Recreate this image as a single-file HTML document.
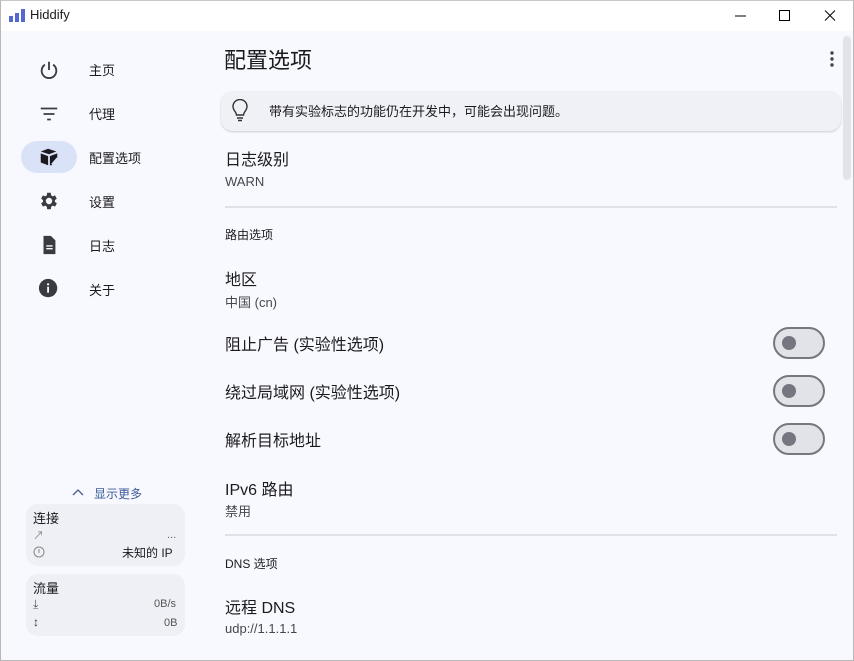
<!DOCTYPE html>
<html><head><meta charset="utf-8"><style>
*{margin:0;padding:0;box-sizing:border-box}
body{width:854px;height:661px;overflow:hidden;background:#f8f9fe;font-family:"Liberation Sans","Noto Sans CJK SC",sans-serif;color:#1b1b1f;position:relative}
.a{position:absolute;white-space:nowrap}
.frame{position:absolute;left:0;top:0;width:854px;height:661px;border:1px solid #b8b8b8;border-top:1px solid #c8c8c8;pointer-events:none}
.title{position:absolute;left:0;top:0;width:854px;height:31px;background:#fff}
.nav{font-size:13px;color:#1b1b1f}
.h{font-size:16px}
.s{font-size:13px;color:#45464f}
.sec{font-size:12px;color:#1b1b1f}
.div{position:absolute;left:225px;width:612px;height:2px;background:#e0e1e6}
.tg{position:absolute;left:773px;width:52px;height:32px;border:2px solid #75767f;border-radius:16px;background:#e2e2e9}
.tg::after{content:"";position:absolute;left:7px;top:7px;width:14px;height:14px;border-radius:50%;background:#75767f}
.card{position:absolute;left:26px;width:159px;background:#eef0f6;border-radius:12px}
</style></head><body>
<div class="title"></div>
<svg class="a" style="left:9px;top:8px" width="17" height="14" viewBox="0 0 17 14"><rect x="0" y="8" width="4" height="6" fill="#5468d4"/><rect x="6" y="5" width="4" height="9" fill="#5468d4"/><rect x="12" y="1" width="4" height="13" fill="#5468d4"/></svg>
<div class="a" style="left:30px;top:7px;font-size:13px">Hiddify</div>
<svg class="a" style="left:730px;top:8px" width="110" height="16"><line x1="5" y1="8" x2="16" y2="8" stroke="#000" stroke-width="1"/><rect x="49.5" y="2.5" width="10" height="10" fill="none" stroke="#000"/><path d="M95 2.5l10 10M105 2.5l-10 10" stroke="#000"/></svg>

<!-- nav -->
<svg class="a" style="left:38px;top:59px" width="22" height="22" viewBox="0 0 24 24"><path d="M12 3v9" stroke="#3a3b42" stroke-width="2"/><path d="M7.5 6.2A8 8 0 1 0 16.5 6.2" fill="none" stroke="#3a3b42" stroke-width="2"/></svg>
<div class="a nav" style="left:89px;top:60px">主页</div>
<svg class="a" style="left:38px;top:103px" width="22" height="22" viewBox="0 0 24 24"><path d="M3 6h18M6 12h12M10 18h4" stroke="#3a3b42" stroke-width="2"/></svg>
<div class="a nav" style="left:89px;top:104px">代理</div>
<div class="a" style="left:21px;top:141px;width:56px;height:32px;border-radius:16px;background:#dae2f7"></div>
<svg class="a" style="left:38px;top:146px" width="22" height="22" viewBox="0 0 24 24"><path d="M3 6l8-3 9 3-8 3z" fill="#1b1b1f"/><path d="M3 8l8 3v10l-8-3z" fill="#1b1b1f"/><path d="M13 11l8-3v5l-6 8h-2z" fill="#1b1b1f"/><path d="M15 20l6-7" stroke="#dae2f7" stroke-width="1.5"/></svg>
<div class="a nav" style="left:89px;top:148px">配置选项</div>
<svg class="a" style="left:38px;top:190px" width="22" height="22" viewBox="0 0 24 24"><path fill="#3a3b42" d="M19.4 13a7.5 7.5 0 0 0 0-2l2.1-1.6-2-3.5-2.5 1a7 7 0 0 0-1.7-1L15 3h-4l-.4 2.9a7 7 0 0 0-1.7 1l-2.5-1-2 3.5L6.5 11a7.5 7.5 0 0 0 0 2l-2.1 1.6 2 3.5 2.5-1a7 7 0 0 0 1.7 1L11 21h4l.4-2.9a7 7 0 0 0 1.7-1l2.5 1 2-3.5zM13 15.5a3.5 3.5 0 1 1 0-7 3.5 3.5 0 0 1 0 7z" transform="translate(-1 0)"/></svg>
<div class="a nav" style="left:89px;top:192px">设置</div>
<svg class="a" style="left:38px;top:234px" width="22" height="22" viewBox="0 0 24 24"><path fill="#3a3b42" d="M6 2h8l5 5v15H6z"/><path d="M9 13h7M9 16h7" stroke="#f8f9fe" stroke-width="1.5"/></svg>
<div class="a nav" style="left:89px;top:236px">日志</div>
<svg class="a" style="left:38px;top:278px" width="22" height="22" viewBox="0 0 24 24"><circle cx="11" cy="11" r="10" fill="#3a3b42"/><rect x="10" y="9.5" width="2" height="6.5" fill="#f8f9fe"/><circle cx="11" cy="6.8" r="1.2" fill="#f8f9fe"/></svg>
<div class="a nav" style="left:89px;top:280px">关于</div>

<svg class="a" style="left:72px;top:488px" width="12" height="10"><path d="M1 7l5-5 5 5" fill="none" stroke="#4a5a8a" stroke-width="1.3"/></svg>
<div class="a" style="left:94px;top:485px;font-size:12px;color:#3c5a99">显示更多</div>
<div class="card" style="top:504px;height:62px"></div>
<div class="a" style="left:33px;top:508px;font-size:13px">连接</div>
<div class="a" style="left:33px;top:527px;font-size:11px;color:#888">↗</div>
<div class="a" style="left:167px;top:529px;font-size:11px;color:#666">...</div>
<svg class="a" style="left:33px;top:546px" width="12" height="12"><circle cx="6" cy="6" r="5" fill="none" stroke="#888"/><path d="M6 3v4" stroke="#888"/></svg>
<div class="a" style="left:122px;top:544px;font-size:12px">未知的 IP</div>
<div class="card" style="top:574px;height:62px"></div>
<div class="a" style="left:33px;top:578px;font-size:13px">流量</div>
<div class="a" style="left:33px;top:597px;font-size:12px;color:#555">⤓</div>
<div class="a" style="left:154px;top:598px;font-size:11px;color:#555">0B/s</div>
<div class="a" style="left:33px;top:615px;font-size:12px;color:#333">↕</div>
<div class="a" style="left:164px;top:617px;font-size:11px;color:#555">0B</div>

<!-- main -->
<div class="a" style="left:224px;top:43px;font-size:22px">配置选项</div>
<svg class="a" style="left:829px;top:51px" width="6" height="16"><circle cx="3" cy="2" r="1.7" fill="#444"/><circle cx="3" cy="8" r="1.7" fill="#444"/><circle cx="3" cy="14" r="1.7" fill="#444"/></svg>
<div class="a" style="left:221px;top:91px;width:620px;height:40px;border-radius:12px;background:#f0f1f6;box-shadow:0 1px 2px rgba(0,0,0,.18)"></div>
<svg class="a" style="left:232px;top:99px" width="16" height="24" viewBox="0 0 16 24"><path d="M4.5 16c0-3-3.5-4.5-3.5-8.5a7 7 0 0 1 14 0c0 4-3.5 5.5-3.5 8.5z" fill="none" stroke="#333" stroke-width="1.4"/><path d="M5 19h6M6 21.5h4" stroke="#333" stroke-width="1.4"/></svg>
<div class="a" style="left:269px;top:101px;font-size:13px">带有实验标志的功能仍在开发中，可能会出现问题。</div>

<div class="a h" style="left:225px;top:146px">日志级别</div>
<div class="a s" style="left:225px;top:174px">WARN</div>
<div class="div" style="top:206px"></div>
<div class="a sec" style="left:225px;top:226px">路由选项</div>
<div class="a h" style="left:225px;top:266px">地区</div>
<div class="a s" style="left:225px;top:292px">中国 (cn)</div>
<div class="a h" style="left:225px;top:331px">阻止广告 (实验性选项)</div>
<div class="tg" style="top:327px"></div>
<div class="a h" style="left:225px;top:379px">绕过局域网 (实验性选项)</div>
<div class="tg" style="top:375px"></div>
<div class="a h" style="left:225px;top:427px">解析目标地址</div>
<div class="tg" style="top:423px"></div>
<div class="a h" style="left:225px;top:476px">IPv6 路由</div>
<div class="a s" style="left:225px;top:501px">禁用</div>
<div class="div" style="top:534px"></div>
<div class="a sec" style="left:225px;top:555px">DNS 选项</div>
<div class="a h" style="left:225px;top:594px">远程 DNS</div>
<div class="a s" style="left:225px;top:621px">udp://1.1.1.1</div>

<div class="a" style="left:843px;top:36px;width:8px;height:144px;border-radius:4px;background:#e2e3e8"></div>
<div class="frame"></div>
</body></html>
